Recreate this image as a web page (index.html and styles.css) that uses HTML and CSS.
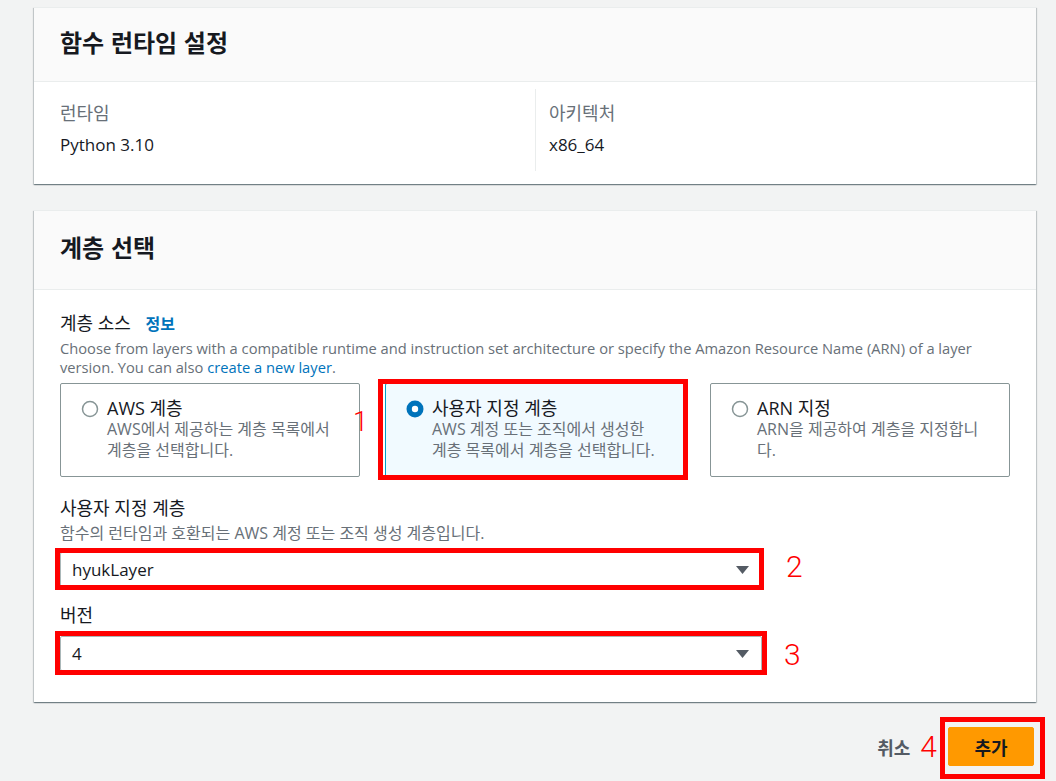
FILE: index.html
```html
<!DOCTYPE html>
<html lang="ko">
<head>
<meta charset="utf-8">
<title>계층 추가</title>
<link rel="stylesheet" href="styles.css">
</head>
<body>
<div class="page">
  <section class="card card-runtime">
    <header class="card-header"><h2>함수 런타임 설정</h2></header>
    <div class="card-body cols">
      <div class="col">
        <div class="kv-label">런타임</div>
        <div class="kv-value">Python 3.10</div>
      </div>
      <div class="col col-2">
        <div class="kv-label">아키텍처</div>
        <div class="kv-value">x86_64</div>
      </div>
    </div>
  </section>

  <section class="card card-layers">
    <header class="card-header tall"><h2>계층 선택</h2></header>
    <div class="card-body form">
      <div class="field">
        <div class="field-label">계층 소스 <a class="info">정보</a></div>
        <p class="field-desc en-desc">Choose from layers with a compatible runtime and instruction set architecture or specify the Amazon Resource Name (ARN) of a layer version. You can also <a class="link">create a new layer</a>.</p>
        <div class="tiles">
          <div class="tile">
            <svg class="radio" width="18" height="18" viewBox="0 0 18 18"><circle cx="9" cy="9" r="7.5" fill="#fff" stroke="#879596" stroke-width="1.5"/></svg>
            <div class="tile-text">
              <div class="tile-title">AWS 계층</div>
              <div class="tile-desc">AWS에서 제공하는 계층 목록에서<br>계층을 선택합니다.</div>
            </div>
          </div>
          <div class="tile selected">
            <span class="mark mark-1"></span>
            <span class="num num-1">1</span>
            <svg class="radio" width="18" height="18" viewBox="0 0 18 18"><circle cx="9" cy="9" r="8.5" fill="#0073bb"/><circle cx="9" cy="9" r="3.2" fill="#fff"/></svg>
            <div class="tile-text">
              <div class="tile-title">사용자 지정 계층</div>
              <div class="tile-desc">AWS 계정 또는 조직에서 생성한<br>계층 목록에서 계층을 선택합니다.</div>
            </div>
          </div>
          <div class="tile">
            <svg class="radio" width="18" height="18" viewBox="0 0 18 18"><circle cx="9" cy="9" r="7.5" fill="#fff" stroke="#879596" stroke-width="1.5"/></svg>
            <div class="tile-text">
              <div class="tile-title">ARN 지정</div>
              <div class="tile-desc">ARN을 제공하여 계층을 지정합니<br>다.</div>
            </div>
          </div>
        </div>
      </div>

      <div class="field field-2">
        <div class="field-label">사용자 지정 계층</div>
        <p class="field-desc ko-desc">함수의 런타임과 호환되는 AWS 계정 또는 조직 생성 계층입니다.</p>
        <div class="select">
          <span class="mark mark-2"></span>
          <span class="num num-2">2</span>
          <span class="select-value">hyukLayer</span>
          <svg class="caret" width="13" height="8" viewBox="0 0 13 8"><polygon points="0,0 13,0 6.5,8" fill="#545b64"/></svg>
        </div>
      </div>

      <div class="field field-3">
        <div class="field-label">버전</div>
        <div class="select select-2">
          <span class="mark mark-3"></span>
          <span class="num num-3">3</span>
          <span class="select-value">4</span>
          <svg class="caret" width="13" height="8" viewBox="0 0 13 8"><polygon points="0,0 13,0 6.5,8" fill="#545b64"/></svg>
        </div>
      </div>
    </div>
  </section>

  <div class="actions">
    <button class="btn-link">취소</button>
    <span class="num num-4">4</span>
    <button class="btn-primary"><span class="mark mark-4"></span>추가</button>
  </div>
</div>
</body>
</html>
```

FILE: styles.css
```css
* { box-sizing: border-box; }
html, body { margin: 0; padding: 0; }
body {
  background: #f2f3f3;
  font-family: "Open Sans", "Noto Sans CJK KR", sans-serif;
  color: #16191f;
  width: 1056px;
  height: 781px;
  overflow: hidden;
}
.page {
  padding: 7px 20px 0 34px;
}
.card {
  background: #fff;
  border-top: 1px solid #eaeded;
  box-shadow: 0 1px 1px 0 rgba(0,28,36,.35), 1px 1px 1px 0 rgba(0,28,36,.15), -1px 1px 1px 0 rgba(0,28,36,.15);
}
.card-header {
  background: #fafafa;
  border-bottom: 1px solid #eaeded;
  height: 74px;
  padding: 0 26px 5px;
  display: flex;
  align-items: center;
}
.card-header.tall { height: 79px; padding-bottom: 6px; }
.card-header h2 {
  margin: 0;
  font-family: "Noto Sans CJK KR", sans-serif;
  font-size: 24px;
  font-weight: 700;
  line-height: 30px;
}
.cols {
  display: grid;
  grid-template-columns: 475px 1fr;
  padding: 7px 26px 13px;
}
.col { padding: 13px 0 15px; }
.col-2 { border-left: 1px solid #eaeded; padding-left: 13px; }
.kv-label {
  font-size: 18px;
  line-height: 22px;
  color: #687078;
}
.kv-value {
  margin-top: 10px;
  font-size: 17px;
  line-height: 22px;
}
.card-layers { margin-top: 26px; }
.form { padding: 22px 26px 31px; }
.field-label {
  font-size: 18px;
  line-height: 22px;
}
.info {
  color: #0073bb;
  font-weight: 700;
  font-size: 16px;
  margin-left: 10px;
}
.field-desc {
  margin: 4px 0 0;
  line-height: 19px;
  color: #687078;
}
.en-desc { font-size: 14.7px; }
.ko-desc { font-size: 16px; }
.link { color: #0073bb; }
.tiles {
  margin-top: 6px;
  display: grid;
  grid-template-columns: repeat(3, 300px);
  gap: 25px;
}
.tile {
  position: relative;
  border: 1px solid #879596;
  border-radius: 2px;
  height: 94px;
  padding: 13px 16px 0 20px;
  display: flex;
  align-items: flex-start;
  gap: 8px;
}
.tile.selected {
  background: #f1faff;
  border-color: #00a1c9;
}
.radio { flex: none; margin-top: 3px; }
.tile-title {
  font-size: 18px;
  line-height: 22px;
}
.tile-desc {
  margin-top: 0;
  font-size: 16px;
  line-height: 21px;
  color: #687078;
  white-space: nowrap;
}
.field-2 { margin-top: 20px; }
.field-2 .field-desc { margin-top: 5px; }
.select {
  position: relative;
  width: 702px;
  height: 35px;
  margin-top: 9px;
  border: 1px solid #aab7b8;
  border-radius: 2px;
  display: flex;
  align-items: center;
  padding: 0 12px 0 11px;
  font-size: 17px;
}
.select-value { flex: 1; }
.caret { flex: none; }
.field-3 { margin-top: 17px; }
.select-2 { margin-top: 10px; }

.mark {
  position: absolute;
  border: 5px solid #ff0000;
  pointer-events: none;
}
.mark-1 { left: -8px; right: -4px; top: -5px; bottom: -4px; }
.mark-2 { left: -6px; right: -3px; top: -5px; bottom: -4px; }
.mark-3 { left: -6px; right: -6px; top: -6px; bottom: -5px; }
.mark-4 { left: -9px; right: -12px; top: -11px; bottom: -14px; }
.num {
  position: absolute;
  color: #ff0000;
  font-family: Roboto, "Liberation Sans", sans-serif;
  font-weight: 300;
  font-size: 30px;
  line-height: 30px;
}
.num-1 { left: -33px; top: 23px; font-size: 27px; }
.num-2 { left: 725px; top: -1px; }
.num-3 { left: 723px; top: 3px; }

.actions {
  display: flex;
  justify-content: flex-end;
  align-items: center;
  margin-top: 25px;
  padding-right: 2px;
}
.btn-link {
  background: none;
  border: 0;
  padding: 0;
  font-family: "Noto Sans CJK KR", sans-serif;
  font-weight: 700;
  font-size: 18px;
  color: #545b64;
}
.actions .num-4 {
  position: static;
  margin: 0 11px 0 10px;
  line-height: 30px;
}
.btn-primary {
  position: relative;
  width: 86px;
  height: 39px;
  background: #ff9900;
  border: 1px solid #ff9900;
  border-radius: 2px;
  font-family: "Noto Sans CJK KR", sans-serif;
  font-weight: 700;
  font-size: 18px;
  color: #16191f;
  padding: 0;
}
```
